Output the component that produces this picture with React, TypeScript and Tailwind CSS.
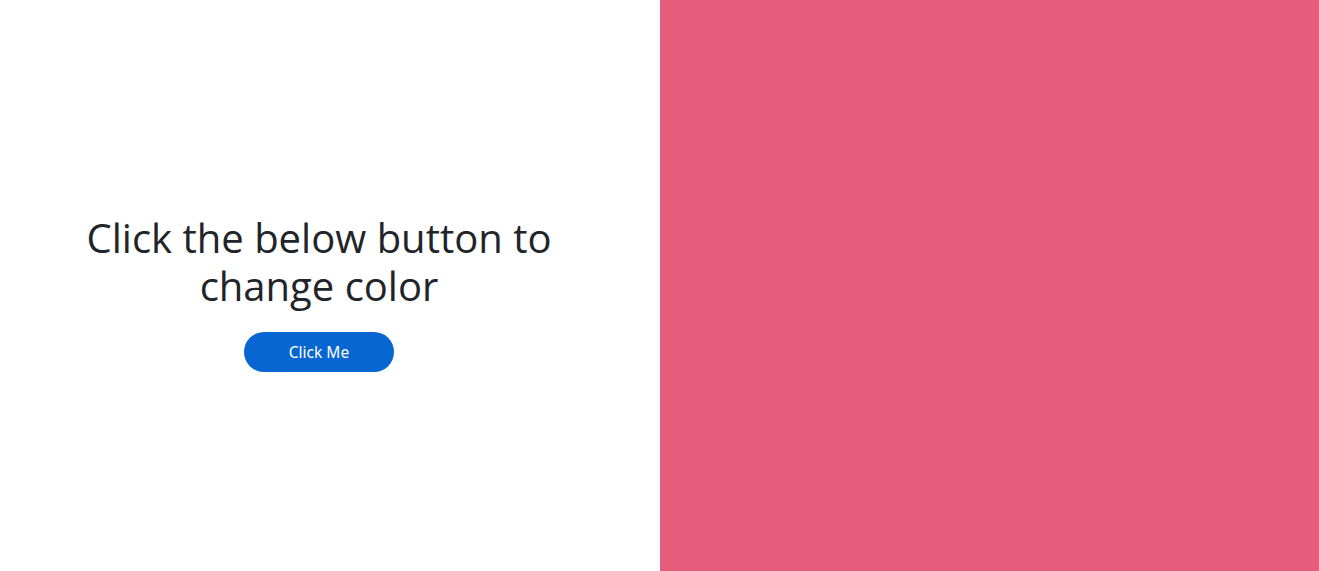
import { useState } from "react";

const colors = ["#e65d7b", "#4caf82", "#f0a33a", "#6a5acd", "#2ab0c8"];

const App = () => {
  const [idx, setIdx] = useState(0);

  return (
    <div className="flex w-full h-[571px] font-['Open_Sans',sans-serif]">
      {/* Left panel */}
      <div className="w-[660px] h-full bg-white flex flex-col items-center justify-center pr-[22px] pt-[15px]">
        <h1 className="text-[40px] leading-[48px] text-[#212529] text-center font-normal w-[500px]">
          Click the below button to change color
        </h1>
        <button
          className="mt-[22px] w-[150px] h-10 pt-[2px] rounded-full bg-[#0866d2] text-white text-[15.5px] font-['Noto_Sans',sans-serif]"
          onClick={() => setIdx((idx + 1) % colors.length)}
        >
          Click Me
        </button>
      </div>

      {/* Color panel */}
      <div className="flex-1 h-full" style={{ backgroundColor: colors[idx] }} />
    </div>
  );
};

export default App;
